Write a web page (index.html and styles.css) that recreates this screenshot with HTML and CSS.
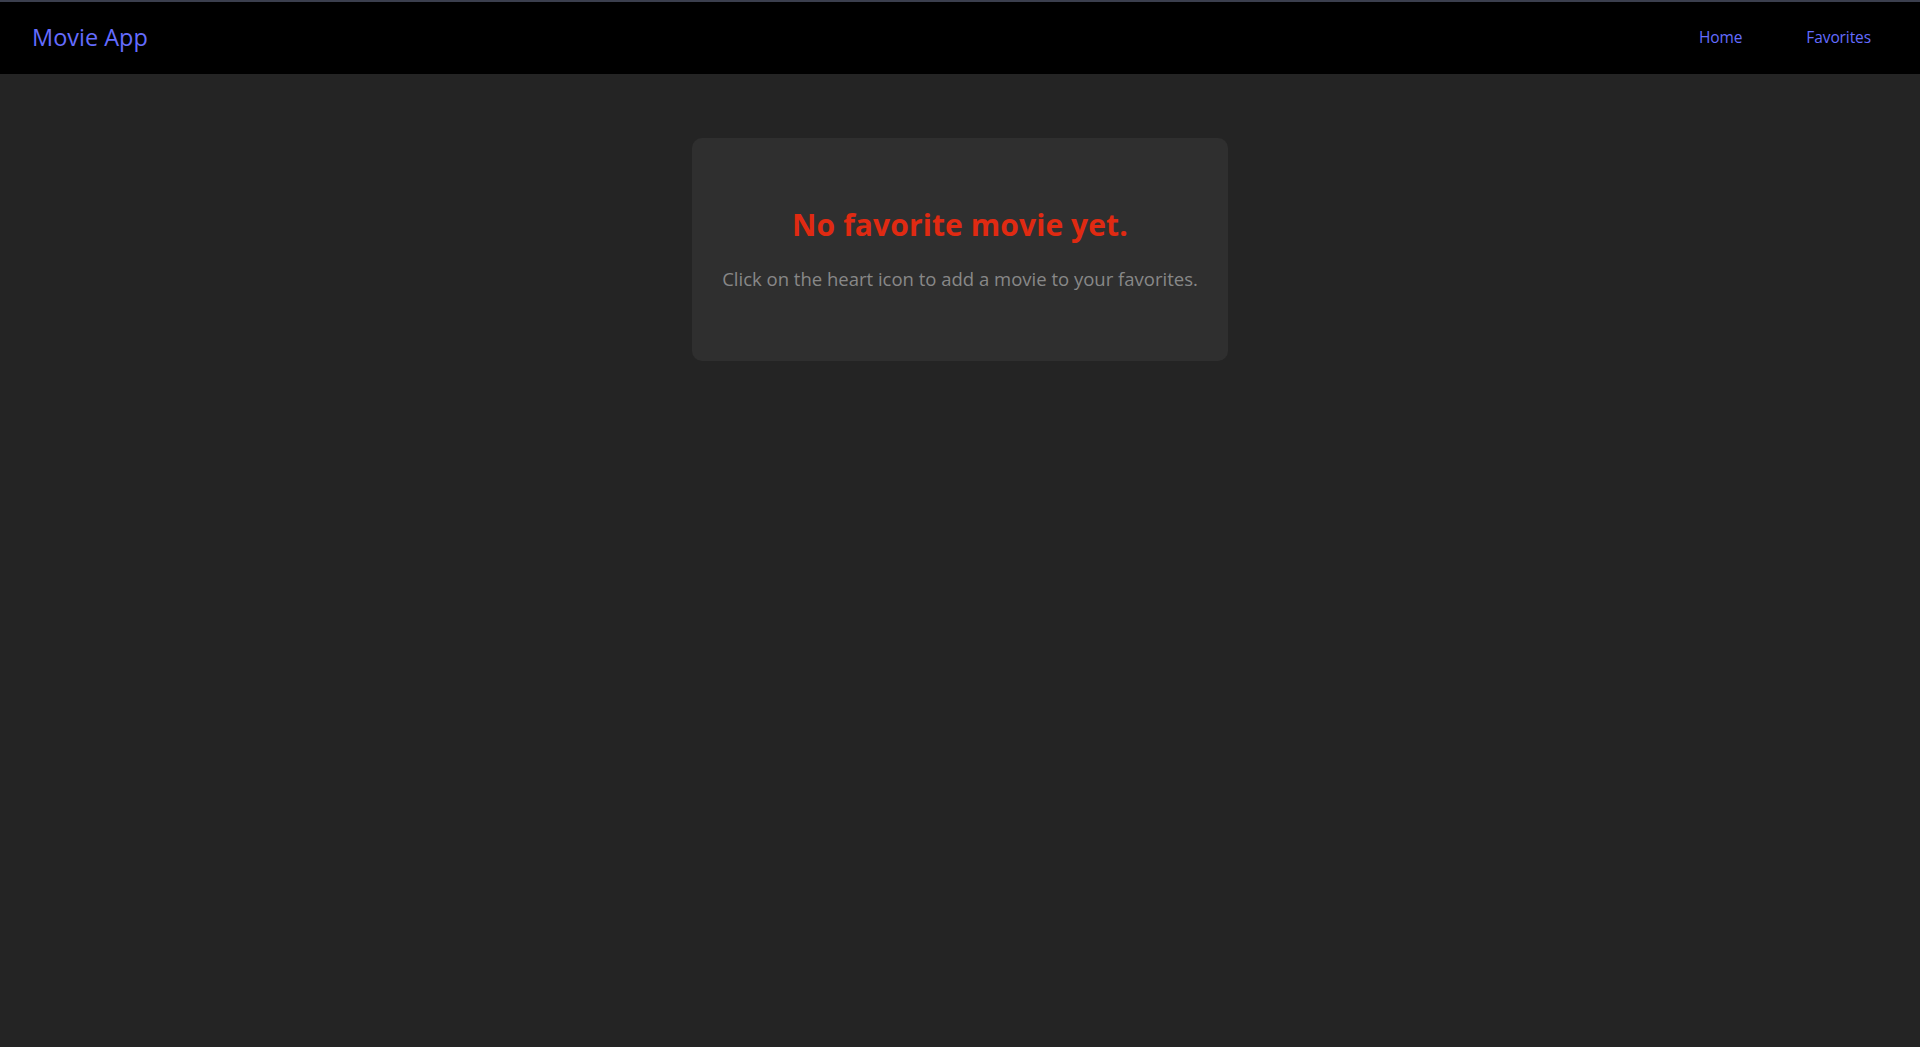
FILE: index.html
```html
<!DOCTYPE html>
<html lang="en">
<head>
<meta charset="utf-8">
<title>Movie App</title>
<link rel="stylesheet" href="styles.css">
</head>
<body>
<nav class="navbar">
  <a class="brand" href="#">Movie App</a>
  <div class="nav-links">
    <a class="nav-link" href="#">Home</a>
    <a class="nav-link" href="#">Favorites</a>
  </div>
</nav>
<main class="content">
  <section class="empty-card">
    <h2 class="empty-title">No favorite movie yet.</h2>
    <p class="empty-text">Click on the heart icon to add a movie to your favorites.</p>
  </section>
</main>
</body>
</html>
```
FILE: styles.css
```css
* { box-sizing: border-box; }
html, body { margin: 0; padding: 0; }
body {
  background: #242424;
  font-family: "Open Sans", "Noto Sans", sans-serif;
  min-height: 1047px;
}
.navbar {
  height: 74px;
  background: #000;
  border-top: 2px solid #3b3f4e;
  display: flex;
  align-items: center;
  justify-content: space-between;
  padding: 0 49px 2px 32px;
}
.brand {
  color: #646cff;
  text-decoration: none;
  font-size: 23.5px;
  letter-spacing: 0;
}
.nav-links {
  display: flex;
  gap: 64px;
}
.nav-link {
  color: #646cff;
  text-decoration: none;
  font-size: 15.5px;
  font-weight: 500;
  letter-spacing: -0.1px;
}
.content {
  display: flex;
  justify-content: center;
  padding-top: 64px;
}
.empty-card {
  width: 536px;
  height: 223px;
  background: #2f2f2f;
  border-radius: 10px;
  text-align: center;
  padding-top: 67px;
}
.empty-title {
  margin: 0;
  color: #e02a12;
  font-size: 30px;
  font-weight: 700;
  line-height: 40px;
  letter-spacing: 0.1px;
}
.empty-text {
  margin: 22px 0 0;
  color: #888;
  font-size: 18.5px;
  line-height: 24px;
  letter-spacing: 0;
}
```
